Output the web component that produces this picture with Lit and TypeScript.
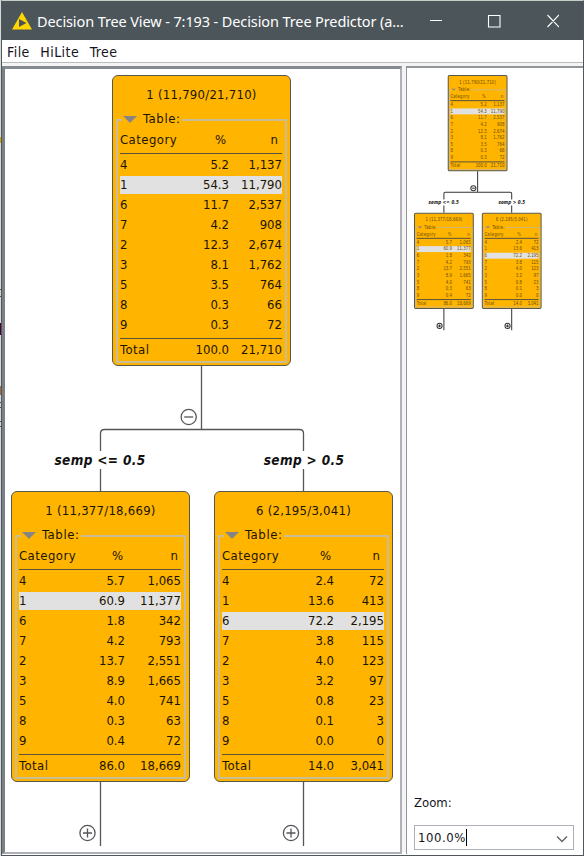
import { LitElement, html, css, svg } from "lit";
import { customElement, property } from "lit/decorators.js";
import { classMap } from "lit/directives/class-map.js";

interface TreeNode {
  x: number;
  y: number;
  title: string;
  hit: string;
  countWidth: number;
  rows: [string, string, string][];
  total: [string, string];
}

const NODES: TreeNode[] = [
  {
    x: 107, y: 6, title: "1 (11,790/21,710)", hit: "1", countWidth: 53,
    rows: [["4", "5.2", "1,137"], ["1", "54.3", "11,790"], ["6", "11.7", "2,537"], ["7", "4.2", "908"], ["2", "12.3", "2,674"], ["3", "8.1", "1,762"], ["5", "3.5", "764"], ["8", "0.3", "66"], ["9", "0.3", "72"]],
    total: ["100.0", "21,710"],
  },
  {
    x: 6, y: 422, title: "1 (11,377/18,669)", hit: "1", countWidth: 56,
    rows: [["4", "5.7", "1,065"], ["1", "60.9", "11,377"], ["6", "1.8", "342"], ["7", "4.2", "793"], ["2", "13.7", "2,551"], ["3", "8.9", "1,665"], ["5", "4.0", "741"], ["8", "0.3", "63"], ["9", "0.4", "72"]],
    total: ["86.0", "18,669"],
  },
  {
    x: 209, y: 422, title: "6 (2,195/3,041)", hit: "6", countWidth: 50,
    rows: [["4", "2.4", "72"], ["1", "13.6", "413"], ["6", "72.2", "2,195"], ["7", "3.8", "115"], ["2", "4.0", "123"], ["3", "3.2", "97"], ["5", "0.8", "23"], ["8", "0.1", "3"], ["9", "0.0", "0"]],
    total: ["14.0", "3,041"],
  },
];

@customElement("tree-node")
class TreeNodeCard extends LitElement {
  @property({ attribute: false }) node!: TreeNode;
  @property({ type: Boolean, reflect: true }) small = false;

  static styles = css`
    :host {
      display: block;
      box-sizing: border-box;
      width: 179px;
      height: 291px;
      padding: 0 3px;
      border: 1px solid #5a574c;
      border-radius: 6px;
      background: #ffb400;
      color: #1c1400;
      overflow: hidden;
    }
    :host([small]) { border-width: 3px; padding: 0 1px; border-radius: 5px; color: #6e4e00; }
    .title { height: 43px; line-height: 37px; text-align: center; white-space: nowrap; letter-spacing: 0.25px; }
    :host([small]) .title { height: 41px; }
    .panel { box-sizing: border-box; height: 244px; border: 2px solid #c8bd98; padding: 0 2px; }
    :host([small]) .panel { height: 242px; border-color: #c0bba8; }
    .legend {
      display: flex; align-items: center; gap: 6px; width: 59px; height: 16px;
      margin: -10px 0 0 2px; padding-left: 1px; background: #ffb400; line-height: 16px; white-space: nowrap;
      letter-spacing: 0.6px;
    }
    .arrow { width: 14px; height: 7px; fill: #858585; flex: none; }
    .row { display: grid; height: 18px; line-height: 17px; margin-bottom: 2px; text-align: right; white-space: nowrap; width: 162px; }
    .row :first-child { text-align: left; }
    .head { box-sizing: border-box; height: 27px; line-height: 26px; border-bottom: 1px solid #5b523c; }
    .head span { position: relative; }
    .head :first-child, .total :first-child { letter-spacing: 0.45px; }
    .head :nth-child(2) { left: -3px; }
    .head :nth-child(3) { left: -4px; }
    .hit { background: #e1e1e1; }
    .total { height: 22px; line-height: 22px; border-top: 1px solid #5b523c; margin: 4px 0 0; }
    :host([small]) .head { border-width: 3px; }
    :host([small]) .total { border-width: 3px; margin-top: 2px; }
  `;

  render() {
    const n = this.node;
    const cols = `grid-template-columns: 1fr 50px ${n.countWidth}px`;
    return html`
      <div class="title">${n.title}</div>
      <div class="panel">
        <div class="legend"><svg class="arrow" viewBox="0 0 14 7"><path d="M0 0H14L7 7Z" /></svg><span>Table:</span></div>
        <div class="row head" style=${cols}><span>Category</span><span>%</span><span>n</span></div>
        ${n.rows.map((r) => html`<div class=${classMap({ row: true, hit: r[0] === n.hit })} style=${cols}>
          <span>${r[0]}</span><span>${r[1]}</span><span>${r[2]}</span></div>`)}
        <div class="row total" style=${cols}><span>Total</span><span>${n.total[0]}</span><span>${n.total[1]}</span></div>
      </div>`;
  }
}

@customElement("tree-canvas")
class TreeCanvas extends LitElement {
  @property({ type: Boolean, reflect: true }) small = false;

  static styles = css`
    :host { display: block; position: relative; width: 394px; height: 783px; }
    .links { position: absolute; left: 0; top: 0; width: 394px; height: 783px; fill: none; stroke: #55565a; stroke-width: 1.3; }
    :host([small]) .links { stroke: #333; stroke-width: 3; }
    .node { position: absolute; }
    .label { position: absolute; top: 382px; width: 120px; font-size: 13.5px; line-height: 19px; text-align: center; font-weight: bold; font-style: italic; color: #111; white-space: nowrap; letter-spacing: 0.35px; }
    .low { left: 35px; }
    .high { left: 239px; }
  `;

  render() {
    const knob = (x: number, y: number, plus: boolean) => svg`
      <circle cx=${x} cy=${y} r="7.6" />
      <path d=${`M${x - 4.5} ${y}h9` + (plus ? `M${x} ${y - 4.5}v9` : "")} />`;
    return html`
      <svg class="links" viewBox="0 0 394 783">
        <path d="M196.5 297V360.5M95.5 382V364.5Q95.5 360.5 99.5 360.5H294.5Q298.5 360.5 298.5 364.5V382M95.5 400V422M298.5 400V422M95.5 713V777M298.5 713V777" />
        ${knob(183.7, 348, false)}${knob(82.5, 764, true)}${knob(286, 764, true)}
      </svg>
      <div class="label low">semp &lt;= 0.5</div>
      <div class="label high">semp &gt; 0.5</div>
      ${NODES.map((n) => html`<tree-node class="node" ?small=${this.small} .node=${n} style=${`left:${n.x}px;top:${n.y}px`}></tree-node>`)}`;
  }
}

@customElement("app-root")
class AppRoot extends LitElement {
  static styles = css`
    :host {
      display: grid;
      grid-template-columns: 1px 583px;
      width: 584px; height: 856px; overflow: hidden;
      font: 13px "DejaVu Sans Condensed", "Noto Sans", sans-serif;
      color: #14141c;
    }
    .edge {
      background: linear-gradient(#d5d9da 0 137px, #c9ac00 137px 143px, #d5d9da 143px 289px, #555 289px 290px, #d4d2c0 290px 296px, #555 296px 297px, #d5d9da 297px 323px, #4d0030 323px 335px, #d5d9da 335px 386px, #a0703a 386px 395px, #d5d9da 395px 402px, #555 402px 403px, #d4d2c0 403px 407px, #555 407px 408px, #d5d9da 408px 421px, #555 421px 422px, #d5d9da 422px 426px, #555 426px 427px, #d5d9da 427px);
    }
    .window {
      box-sizing: border-box; width: 583px; height: 856px;
      display: flex; flex-direction: column;
      border: 1px solid #50575c; border-top-color: #c9cdca; background: #fff;
    }
    .titlebar { display: flex; align-items: center; height: 39px; background: #4c555a; color: #fff; padding-left: 10px; }
    .logo { width: 20px; height: 18px; margin-right: 5px; flex: none; }
    .caption { flex: none; width: 390px; font: 14.5px "Noto Sans", "Open Sans", sans-serif; letter-spacing: -0.11px; line-height: 38px; white-space: nowrap; }
    .controls { width: 132px; height: 14px; fill: none; stroke: #fff; stroke-width: 1.1; }
    .menu { display: flex; gap: 10.5px; height: 23px; line-height: 24px; padding-left: 5px; box-sizing: border-box; border-bottom: 1px solid #b9bcbd; font-size: 14px; letter-spacing: 0.45px; }
    .body { display: flex; height: 789px; padding-top: 3px; box-sizing: border-box; background: #f4f4f4; }
    .main { box-sizing: border-box; width: 400px; height: 788px; overflow: hidden; border: solid; border-width: 3px 2px 2px 3px; border-color: #868a91 #b0b0b8 #b0b0b8 #7b8287; background: #fff; }
    .side { box-sizing: border-box; width: 177px; height: 788px; margin-left: 4px; display: flex; flex-direction: column; border: solid #929599; border-width: 2px 0 0 1px; background: #fff; }
    .overview { height: 724px; padding: 5px 0 0 5px; box-sizing: border-box; }
    .scaled { transform: scale(0.334, 0.331); transform-origin: 0 0; width: 394px; height: 719px; }
    .zoom { padding-left: 7px; line-height: 22px; height: 33px; }
    .combo { box-sizing: border-box; display: flex; align-items: center; width: 160px; height: 25px; margin-left: 7px; padding: 0 4px 0 3px; border: 1px solid #b0b0b9; }
    .value { letter-spacing: 0.55px; line-height: 22px; }
    .caret { width: 1px; height: 17px; background: #000; }
    .chevron { margin-left: auto; width: 12px; height: 8px; fill: none; stroke: #666; stroke-width: 1.5; margin-right: 1px; margin-top: 3px; }
  `;

  render() {
    return html`
      <div class="edge"></div>
      <div class="window">
        <div class="titlebar">
          <svg class="logo" viewBox="0 0 20 18"><path fill="#ffd600" d="M10 0L20 17.5H0Z" /><path fill="#4c555a" d="M7 7L14.5 11L7 15Z" /></svg>
          <span class="caption">Decision Tree View - 7:193 - Decision Tree Predictor (a...</span>
          <svg class="controls" viewBox="0 0 132 14"><path d="M3 6.5H15M61.5 1.5H73V13H61.5ZM120.5 1L132 13M132 1L120.5 13" /></svg>
        </div>
        <div class="menu"><span>File</span><span>HiLite</span><span>Tree</span></div>
        <div class="body">
          <div class="main"><tree-canvas></tree-canvas></div>
          <div class="side">
            <div class="overview"><div class="scaled"><tree-canvas small></tree-canvas></div></div>
            <div class="zoom">Zoom:</div>
            <div class="combo"><span class="value">100.0%</span><span class="caret"></span>
              <svg class="chevron" viewBox="0 0 12 8"><path d="M1 1.5L6 6.5L11 1.5" /></svg></div>
          </div>
        </div>
      </div>`;
  }
}
